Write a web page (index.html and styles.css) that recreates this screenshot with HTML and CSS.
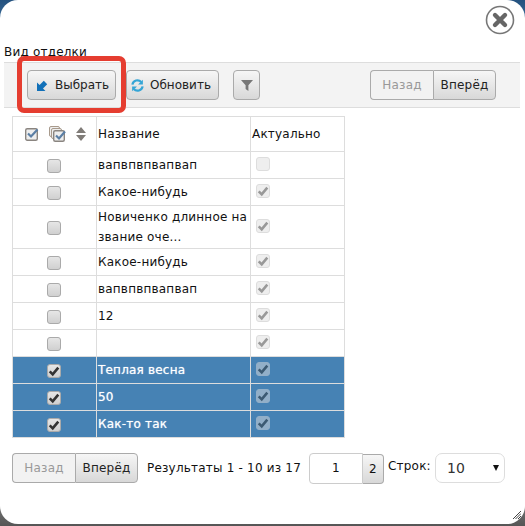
FILE: index.html
```html
<!DOCTYPE html>
<html>
<head>
	<meta charset="utf-8" />
	<title>Вид отделки</title>
	<link rel="stylesheet" href="styles.css">
</head>
<body>
<svg class="defs" width="0" height="0">
	<symbol id="tick" viewBox="0 0 14 14">
		<path d="M2 7.5 L5.5 11 L12 3" fill="none" stroke="currentColor" stroke-width="3" />
	</symbol>
</svg>
<div id="dialog">
	<div class="close">
		<svg width="30" height="30" viewBox="0 0 30 30">
			<circle cx="15" cy="15" r="13.5" fill="#fff" stroke="#777" stroke-width="1.6" />
			<path d="M10 10 L20 20 M20 10 L10 20" stroke="#666" stroke-width="4.4" stroke-linecap="round" />
		</svg>
	</div>
	<div class="title">Вид отделки</div>
	<div class="toolbar">
		<div class="btn btn-select">
			<svg class="ico" width="11" height="11" viewBox="0 0 11 11"><path d="M0 11 V2.5 L2.6 5 L6.8 0.8 L10.2 4.2 L6 8.4 L8.5 11 Z" fill="#1170b8" /></svg>
			<span>Выбрать</span>
		</div>
		<div class="btn btn-refresh">
			<svg class="ico" width="13" height="13" viewBox="0 0 14 14">
				<path d="M1.5 6 A5.5 5.5 0 0 1 11 3.2" fill="none" stroke="#35a5d6" stroke-width="2.4" />
				<path d="M12.8 0.8 V6 H7.6 Z" fill="#35a5d6" />
				<path d="M12.5 8 A5.5 5.5 0 0 1 3 10.8" fill="none" stroke="#35a5d6" stroke-width="2.4" />
				<path d="M1.2 13.2 V8 H6.4 Z" fill="#35a5d6" />
			</svg>
			<span>Обновить</span>
		</div>
		<div class="btn btn-filter">
			<svg width="12" height="12" viewBox="0 0 12 12"><path d="M0 1 H12 L7.4 6.2 V12 L4.6 10 V6.2 Z" fill="#777" /></svg>
		</div>
		<div class="pager pager-right">
			<div class="page-btn off">Назад</div>
			<div class="page-btn">Вперёд</div>
		</div>
	</div>
	<table class="grid">
		<colgroup>
			<col class="col-check"><col class="col-name"><col class="col-flag">
		</colgroup>
		<tr class="head">
			<th>
				<div class="head-icons">
					<svg width="15" height="14" viewBox="0 0 15 14">
						<rect x="0.7" y="1.7" width="11.6" height="11.6" rx="1.5" fill="#eee" stroke="#8a8580" stroke-width="1.4" />
						<path d="M3 6.5 L6 9.5 L12.5 2.5" fill="none" stroke="#5b7fa5" stroke-width="2.2" />
					</svg>
					<svg width="18" height="16" viewBox="0 0 18 16">
						<rect x="0.5" y="0.5" width="10" height="10" rx="1.5" fill="#eee" stroke="#a89a8c" />
						<rect x="2.5" y="2.5" width="10" height="10" rx="1.5" fill="#eee" stroke="#a89a8c" />
						<rect x="4.7" y="4.7" width="10.6" height="10.6" rx="1.5" fill="#eee" stroke="#8a8580" stroke-width="1.4" />
						<path d="M7 9.5 L10 12.5 L16 5.5" fill="none" stroke="#5b7fa5" stroke-width="2.2" />
					</svg>
					<svg width="10" height="14" viewBox="0 0 10 14">
						<path d="M5 0 L10 6 H0 Z M0 8 H10 L5 14 Z" fill="#807c78" />
					</svg>
				</div>
			</th>
			<th>Название</th>
			<th>Актуально</th>
		</tr>
		<tr>
			<td class="cell-check"><span class="box"></span></td>
			<td>вапвпвпвапвап</td>
			<td class="cell-flag"><span class="box off"></span></td>
		</tr>
		<tr>
			<td class="cell-check"><span class="box"></span></td>
			<td>Какое-нибудь</td>
			<td class="cell-flag"><span class="box off"><svg><use href="#tick" /></svg></span></td>
		</tr>
		<tr>
			<td class="cell-check"><span class="box"></span></td>
			<td class="name-long">Новиченко длинное на<br>звание оче...</td>
			<td class="cell-flag"><span class="box off"><svg><use href="#tick" /></svg></span></td>
		</tr>
		<tr>
			<td class="cell-check"><span class="box"></span></td>
			<td>Какое-нибудь</td>
			<td class="cell-flag"><span class="box off"><svg><use href="#tick" /></svg></span></td>
		</tr>
		<tr>
			<td class="cell-check"><span class="box"></span></td>
			<td>вапвпвпвапвап</td>
			<td class="cell-flag"><span class="box off"><svg><use href="#tick" /></svg></span></td>
		</tr>
		<tr>
			<td class="cell-check"><span class="box"></span></td>
			<td>12</td>
			<td class="cell-flag"><span class="box off"><svg><use href="#tick" /></svg></span></td>
		</tr>
		<tr>
			<td class="cell-check"><span class="box"></span></td>
			<td></td>
			<td class="cell-flag"><span class="box off"><svg><use href="#tick" /></svg></span></td>
		</tr>
		<tr class="selected">
			<td class="cell-check"><span class="box"><svg><use href="#tick" /></svg></span></td>
			<td>Теплая весна</td>
			<td class="cell-flag"><span class="box off"><svg><use href="#tick" /></svg></span></td>
		</tr>
		<tr class="selected">
			<td class="cell-check"><span class="box"><svg><use href="#tick" /></svg></span></td>
			<td>50</td>
			<td class="cell-flag"><span class="box off"><svg><use href="#tick" /></svg></span></td>
		</tr>
		<tr class="selected">
			<td class="cell-check"><span class="box"><svg><use href="#tick" /></svg></span></td>
			<td>Как-то так</td>
			<td class="cell-flag"><span class="box off"><svg><use href="#tick" /></svg></span></td>
		</tr>
	</table>
	<div class="footer">
		<div class="pager">
			<div class="page-btn off">Назад</div>
			<div class="page-btn">Вперёд</div>
		</div>
		<div class="results">Результаты 1 - 10 из 17</div>
		<div class="pages">
			<div class="page-cur">1</div>
			<div class="page-num">2</div>
		</div>
		<div class="rows-label">Строк:</div>
		<div class="rows-select"><span>10</span><span class="arrow"></span></div>
	</div>
	<svg class="grip" width="8" height="8" viewBox="0 0 8 8">
		<path d="M0 8 L8 0 M2.5 8 L8 2.5 M5 8 L8 5" stroke="#444" stroke-width="1" />
	</svg>
	<div class="highlight"></div>
</div>
</body>
</html>
```

FILE: styles.css
```css
html, body {
	margin: 0;
	padding: 0;
}
body {
	width: 525px;
	height: 526px;
	overflow: hidden;
	background: linear-gradient(#24527f 0, #3a6a96 20px, #888 490px, #555 526px);
	font-family: "DejaVu Sans", sans-serif;
	font-size: 12px;
	letter-spacing: 0.2px;
	color: #111;
}
.defs {
	position: absolute;
}
#dialog {
	position: relative;
	box-sizing: border-box;
	width: 525px;
	height: 524px;
	padding: 45px 5px 0 4px;
	background: #fff;
	border-radius: 18px;
}
.close {
	position: absolute;
	top: 5px;
	right: 10px;
	height: 30px;
}
.title {
	height: 17px;
	line-height: 15px;
}
.toolbar {
	display: flex;
	align-items: center;
	box-sizing: border-box;
	height: 46px;
	padding: 0 24px 0 23px;
	background: #f3f3f3;
	border-top: 1px solid #ddd;
	border-bottom: 1px solid #ddd;
}
.btn {
	display: flex;
	align-items: center;
	box-sizing: border-box;
	height: 30px;
	background: linear-gradient(#f6f6f6, #d8d8d8);
	border: 1px solid #aaa;
	border-radius: 4px;
	letter-spacing: 0;
	color: #222;
}
.btn-select {
	width: 89px;
	padding-left: 9px;
	gap: 7px;
}
.btn-refresh {
	width: 93px;
	margin-left: 10px;
	padding-left: 4px;
	gap: 6px;
}
.btn-filter {
	justify-content: center;
	width: 27px;
	margin-left: 14px;
}
.pager {
	display: flex;
	height: 30px;
}
.pager-right {
	margin-left: auto;
}
.page-btn {
	box-sizing: border-box;
	width: 63px;
	line-height: 28px;
	text-align: center;
	background: linear-gradient(#f6f6f6, #d8d8d8);
	border: 1px solid #aaa;
	color: #222;
	border-radius: 0 4px 4px 0;
}
.page-btn.off {
	background: #f2f2f2;
	border-right: 0;
	border-radius: 4px 0 0 4px;
	color: #999;
}
.grid {
	width: 332px;
	margin: 8px 0 0 8px;
	table-layout: fixed;
	border-collapse: collapse;
}
.col-check {
	width: 84px;
}
.col-name {
	width: 154px;
}
.col-flag {
	width: 94px;
}
.grid th, .grid td {
	box-sizing: border-box;
	height: 27px;
	padding: 0 1px;
	border: 1px solid #ddd;
	font-weight: normal;
	text-align: left;
	vertical-align: middle;
}
.grid .head th {
	height: 35px;
}
.grid td {
	padding-bottom: 1px;
}
.grid .name-long {
	height: 43px;
	padding-bottom: 0;
	line-height: 20px;
}
.head-icons {
	display: flex;
	align-items: center;
	gap: 9px;
	padding-left: 11px;
}
.grid .cell-check {
	padding: 2px 2px 0 0;
	text-align: center;
}
.grid .cell-flag {
	padding: 0 0 2px 5px;
}
.box {
	display: block;
	box-sizing: border-box;
	width: 14px;
	height: 14px;
	background: linear-gradient(#e6e6e6, #d0d0d0);
	border: 1px solid #aaa;
	border-radius: 3px;
	color: #333;
}
.box svg {
	display: block;
	width: 12px;
	height: 12px;
}
.cell-check .box {
	margin: 0 auto;
}
.box.off {
	background: #eee;
	border-color: #ddd;
	color: #999;
}
.selected td {
	background: #4682b4;
	text-shadow: 0 0 1px rgba(255, 255, 255, 0.7);
	color: #fff;
}
.selected .cell-flag .box {
	opacity: 0.5;
	background: #ddd;
	color: #333;
}
.footer {
	display: flex;
	align-items: center;
	height: 30px;
	margin: 15px 0 0 8px;
}
.results {
	width: 153px;
	margin-left: 9px;
	white-space: nowrap;
	color: #111;
}
.pages {
	display: flex;
	height: 31px;
	margin-left: 9px;
}
.page-cur {
	box-sizing: border-box;
	width: 54px;
	line-height: 29px;
	text-align: center;
	border: 1px solid #ccc;
	border-radius: 4px 0 0 4px;
}
.page-num {
	box-sizing: border-box;
	width: 21px;
	height: 30px;
	margin-top: 1px;
	line-height: 28px;
	text-align: center;
	background: linear-gradient(#f6f6f6, #d8d8d8);
	border: 1px solid #aaa;
	border-left: 0;
	border-radius: 0 4px 4px 0;
}
.rows-label {
	width: 42px;
	margin-left: 4px;
	margin-top: -5px;
	white-space: nowrap;
}
.rows-select {
	display: flex;
	align-items: center;
	justify-content: space-between;
	box-sizing: border-box;
	width: 70px;
	height: 30px;
	margin-left: 5px;
	padding: 0 5px 0 11px;
	border: 1px solid #ddd;
	border-radius: 7px;
	font-size: 14px;
	color: #333;
}
.arrow {
	width: 0;
	height: 0;
	border-top: 6px solid #111;
	border-left: 3.5px solid transparent;
	border-right: 3.5px solid transparent;
}
.grip {
	position: absolute;
	right: 4px;
	bottom: 5px;
}
.highlight {
	position: absolute;
	left: 17px;
	top: 56px;
	box-sizing: border-box;
	width: 109px;
	height: 57px;
	border: 5px solid #e53d30;
	border-radius: 7px;
}
```
